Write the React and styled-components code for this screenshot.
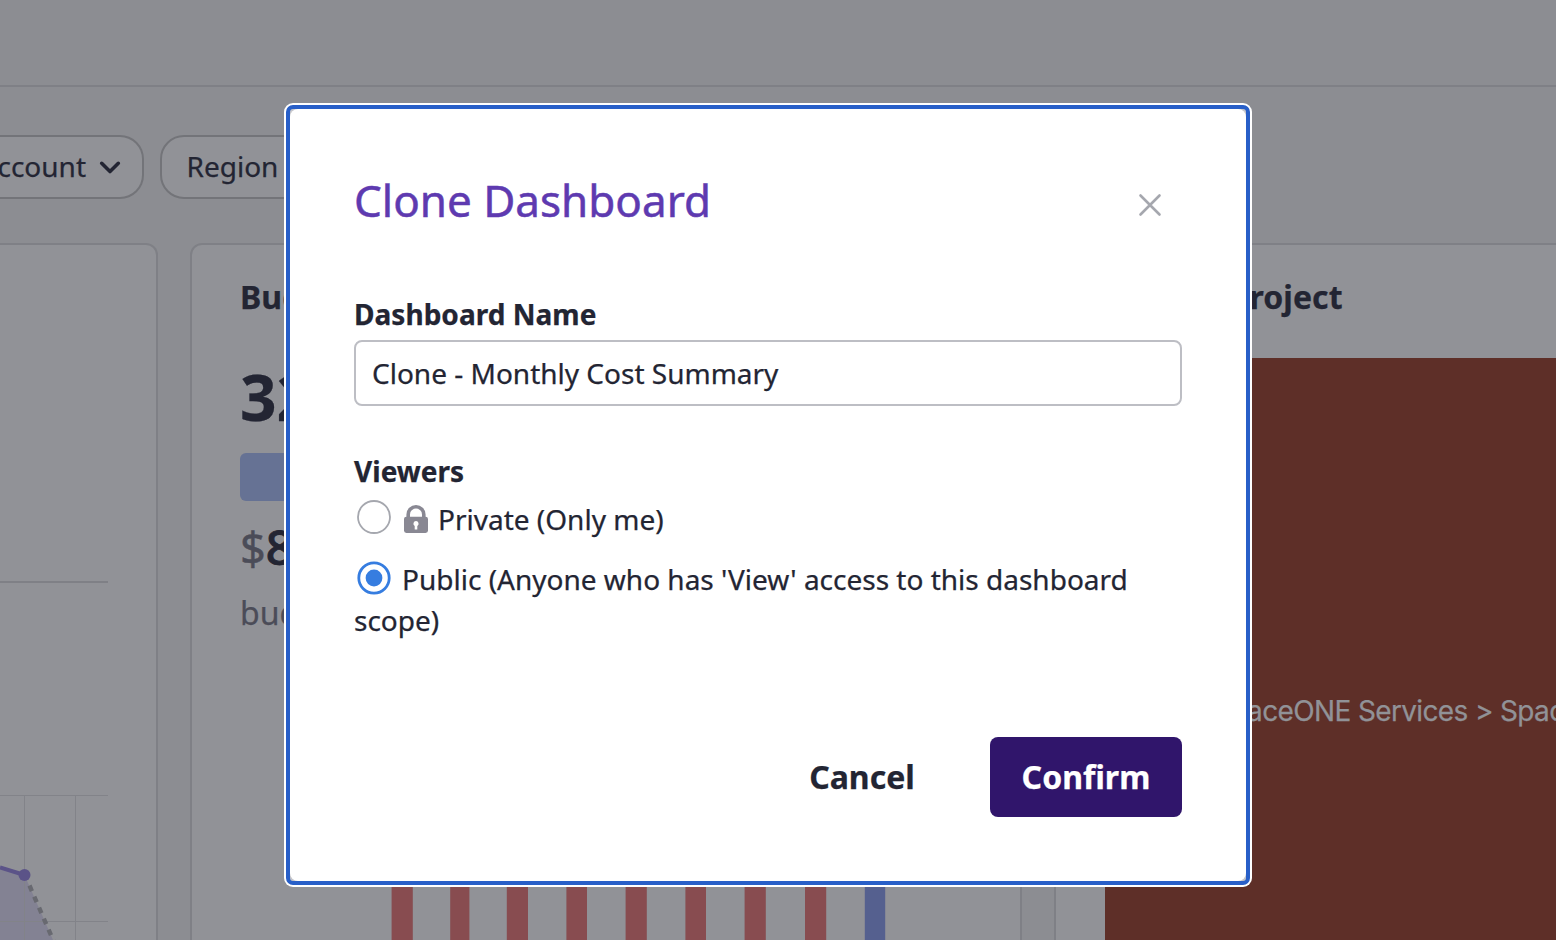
import React from "react";
import styled, { createGlobalStyle } from "styled-components";

const ink = "#232533";
const line = "#7f8086";

const GlobalStyle = createGlobalStyle`
  * { box-sizing: border-box; }
  body { margin: 0; overflow: hidden; font-family: "Noto Sans", sans-serif; color: ${ink}; -webkit-text-stroke: 0.25px; }
  button, input { font-family: inherit; color: inherit; }
`;

const Page = styled.div`
  width: 1556px;
  height: 940px;
  overflow: hidden;
  display: flex;
  flex-direction: column;
  background: #8c8d92;
`;

const TopBar = styled.header`
  flex: 0 0 87px;
  border-bottom: 2px solid ${line};
`;

const Filters = styled.div`
  flex: 0 0 156px;
  padding-top: 48px;
  display: flex;
  align-items: flex-start;
  gap: 16px;
`;

const Pill = styled.div`
  width: ${(p) => p.$width}px;
  height: 64px;
  display: flex;
  align-items: center;
  justify-content: ${(p) => (p.$cut ? "flex-end" : "flex-start")};
  gap: 12px;
  padding: 0 ${(p) => (p.$cut ? 20 : 24.5)}px 2px;
  overflow: hidden;
  border: 2px solid #737479;
  border-left-width: ${(p) => (p.$cut ? 0 : 2)}px;
  border-radius: ${(p) => (p.$cut ? "0 24px 24px 0" : "24px")};
  background: #919297;
  font-size: 28px;
  line-height: 40px;
  white-space: nowrap;

  svg {
    flex: none;
  }
`;

const Widgets = styled.main`
  flex: 1;
  min-height: 0;
  display: flex;
  gap: 32px;
`;

const Card = styled.section`
  flex: 0 0 ${(p) => p.$width}px;
  height: 760px;
  overflow: hidden;
  display: flex;
  flex-direction: column;
  border: 2px solid ${line};
  border-left-width: ${(p) => (p.$cut ? 0 : 2)}px;
  border-radius: ${(p) => (p.$cut ? "0 12px 12px 0" : "12px")};
  background: #919297;
  padding: ${(p) => p.$pad || "0"};
`;

const Divider = styled.div`
  flex: none;
  width: 108px;
  height: 2px;
  margin-top: 336px;
  background: ${line};
`;

const TrendChart = styled.svg`
  display: block;
  flex: none;
  margin-top: 207px;
`;

const CardTitle = styled.h2`
  margin: 0;
  font-size: 32px;
  line-height: 44px;
  font-weight: 700;
  letter-spacing: 0.07px;
  white-space: nowrap;
`;

const Figure = styled.div`
  margin-top: 38px;
  font-size: 64px;
  line-height: 80px;
  font-weight: 700;
`;

const Progress = styled.div`
  flex: none;
  height: 48px;
  margin-top: 16px;
  border-radius: 6px;
  background: #667294;
`;

const Amount = styled.div`
  height: 60px;
  margin-top: 16px;
  font-size: 48px;
  line-height: 60px;
  font-weight: 500;
  -webkit-text-stroke: 0.9px;
`;

const Currency = styled.span`
  color: #4b4c58;
  font-size: 45px;
  font-weight: 400;
  -webkit-text-stroke: 0.5px;
`;

const Note = styled.div`
  margin-top: 16px;
  font-size: 32px;
  line-height: 40px;
  color: #4b4c58;
`;

const BarChart = styled.svg`
  display: block;
  flex: none;
  margin-top: 47px;
`;

const Treemap = styled.div`
  flex: none;
  height: 706px;
  margin-top: 39px;
  margin-left: 1px;
  padding-left: 108px;
  display: flex;
  align-items: center;
  background: #5e2f28;
  color: #919297;
  font-family: Inter, sans-serif;
  font-size: 28px;
  letter-spacing: -0.64px;
  white-space: nowrap;
`;

const Overlay = styled.div`
  position: fixed;
  inset: 0;
  padding: 105px 0 0 286px;
`;

const FocusRing = styled.div`
  width: 964px;
  height: 780px;
  border: 4px solid #285fc8;
  border-radius: 7px;
  box-shadow: 0 0 0 2px #fff;
  background: #c4c5ca;
`;

const Dialog = styled.div`
  width: 100%;
  height: 100%;
  padding: 61px 64px 64px;
  display: flex;
  flex-direction: column;
  border-radius: 8px;
  background: #fff;
`;

const DialogHead = styled.div`
  display: flex;
  justify-content: space-between;
  height: 67px;
`;

const DialogTitle = styled.h1`
  margin: 0;
  font-size: 44px;
  line-height: 60px;
  font-weight: 400;
  color: #5e3ab0;
  -webkit-text-stroke: 0.5px;
`;

const CloseButton = styled.button`
  width: 64px;
  height: 64px;
  margin-top: 3px;
  padding: 0;
  display: grid;
  place-items: center;
  border: 0;
  background: none;
`;

const Label = styled.div`
  margin-top: ${(p) => p.$top}px;
  font-size: 28px;
  line-height: 40px;
  font-weight: 700;
  letter-spacing: 0.03px;
`;

const TextInput = styled.input`
  width: 100%;
  height: 66px;
  margin-top: 6px;
  padding: 0 16px;
  border: 2px solid #bdbec4;
  border-radius: 8px;
  background: #fff;
  font-size: 28px;
  outline: none;
`;

const Options = styled.div`
  margin-top: 8px;
  display: flex;
  flex-direction: column;
  gap: 19px;
`;

const Option = styled.label`
  font-size: 28px;
  line-height: 41px;
`;

const RadioMark = styled.svg`
  width: 34px;
  height: 34px;
  margin: 0 11px 0 3px;
  vertical-align: ${(p) => p.$drop}px;
`;

const LockMark = styled.svg`
  width: 24px;
  height: 28px;
  margin: 0 10px 0 2px;
  vertical-align: -3px;
`;

const Actions = styled.div`
  margin-top: auto;
  display: flex;
  justify-content: flex-end;
  gap: 32px;
`;

const ActionButton = styled.button`
  width: 192px;
  height: 80px;
  padding: 0 0 2px;
  border: 0;
  border-radius: 8px;
  background: ${(p) => (p.$primary ? "#30156b" : "transparent")};
  color: ${(p) => (p.$primary ? "#fff" : ink)};
  font-size: 32px;
  font-weight: 700;
`;

function Chevron() {
  return (
    <svg width="24" height="24" viewBox="0 0 24 24" fill="none" stroke={ink} strokeWidth="3.6" strokeLinecap="round" strokeLinejoin="round">
      <path d="M3.7 9.3l8.3 8.2 8.3-8.2" />
    </svg>
  );
}

function Radio({ checked, drop }) {
  return (
    <RadioMark viewBox="0 0 34 34" fill="none" $drop={drop}>
      <circle cx="17" cy="17" r={checked ? 15.2 : 16} stroke={checked ? "#367de0" : "#a5a7ae"} strokeWidth={checked ? 2.8 : 1.8} />
      {checked && <circle cx="17" cy="17" r="8.4" fill="#367de0" />}
    </RadioMark>
  );
}

function Lock() {
  return (
    <LockMark viewBox="0 0 24 28">
      <path d="M4.2 13V9.4a7.8 7.6 0 0 1 15.6 0V13" fill="none" stroke="#898893" strokeWidth="3.6" />
      <rect y="11.7" width="24" height="16.3" rx="2.4" fill="#898893" />
      <path d="M12 16a2.7 2.7 0 0 0-1.3 5v3.4h2.6V21A2.7 2.7 0 0 0 12 16z" fill="#fff" />
    </LockMark>
  );
}

const bars = [
  [391.6, 21.2], [450.2, 19.2], [506.8, 21.2], [566.4, 20.6], [625.6, 21.2],
  [685.4, 20.6], [744.6, 21.2], [805, 21.2], [864.8, 20.4],
];

export default function App() {
  return (
    <>
      <GlobalStyle />
      <Page>
        <TopBar />
        <Filters>
          <Pill $width={144} $cut>
            <span>Account</span>
            <Chevron />
          </Pill>
          <Pill $width={190}>
            <span>Region</span>
            <Chevron />
          </Pill>
        </Filters>
        <Widgets>
          <Card $width={158} $cut>
            <Divider />
            <TrendChart width="108" height="150" viewBox="0 790 108 150" fill="none">
              <path d="M0 868L24.5 875 53 940H0z" fill="#7e7b91" fillOpacity=".72" />
              <path d="M0 795.5H108M0 921.5H108M24.5 795V940M75.5 795V940" stroke="#828389" />
              <path d="M0 867.5L24.5 875" stroke="#5b5388" strokeWidth="4" />
              <path d="M29.5 885.5L54 942" stroke="#686970" strokeWidth="4.4" strokeDasharray="6 6" />
              <circle cx="24.5" cy="875" r="6" fill="#5b5388" />
            </TrendChart>
          </Card>
          <Card $width={832} $pad="30px 48px 0">
            <CardTitle>Budget</CardTitle>
            <Figure>32%</Figure>
            <Progress />
            <Amount><Currency>$</Currency>8</Amount>
            <Note>budget</Note>
            <BarChart width="732" height="260" viewBox="240 680 732 260">
              {bars.map(([x, w], i) => (
                <rect key={x} x={x} y="700" width={w} height="240" fill={i === 8 ? "#55608f" : "#884c50"} />
              ))}
            </BarChart>
          </Card>
          <Card $width={832} $pad="30px 48px 0">
            <CardTitle>Cost by Project</CardTitle>
            <Treemap>SpaceONE Services &gt; SpaceONE</Treemap>
          </Card>
        </Widgets>
      </Page>
      <Overlay>
        <FocusRing>
          <Dialog role="dialog" aria-label="Clone Dashboard">
            <DialogHead>
              <DialogTitle>Clone Dashboard</DialogTitle>
              <CloseButton aria-label="Close">
                <svg width="24" height="24" viewBox="0 0 24 24" fill="none" stroke="#a5a7ae" strokeWidth="2.6" strokeLinecap="round">
                  <path d="M2.5 2.5l19 19M21.5 2.5l-19 19" />
                </svg>
              </CloseButton>
            </DialogHead>
            <Label $top={57}>Dashboard Name</Label>
            <TextInput defaultValue="Clone - Monthly Cost Summary" />
            <Label $top={45}>Viewers</Label>
            <Options>
              <Option><Radio drop={-4} /><Lock />Private (Only me)</Option>
              <Option><Radio checked drop={-5} />Public (Anyone who has 'View' access to this dashboard scope)</Option>
            </Options>
            <Actions>
              <ActionButton>Cancel</ActionButton>
              <ActionButton $primary>Confirm</ActionButton>
            </Actions>
          </Dialog>
        </FocusRing>
      </Overlay>
    </>
  );
}
